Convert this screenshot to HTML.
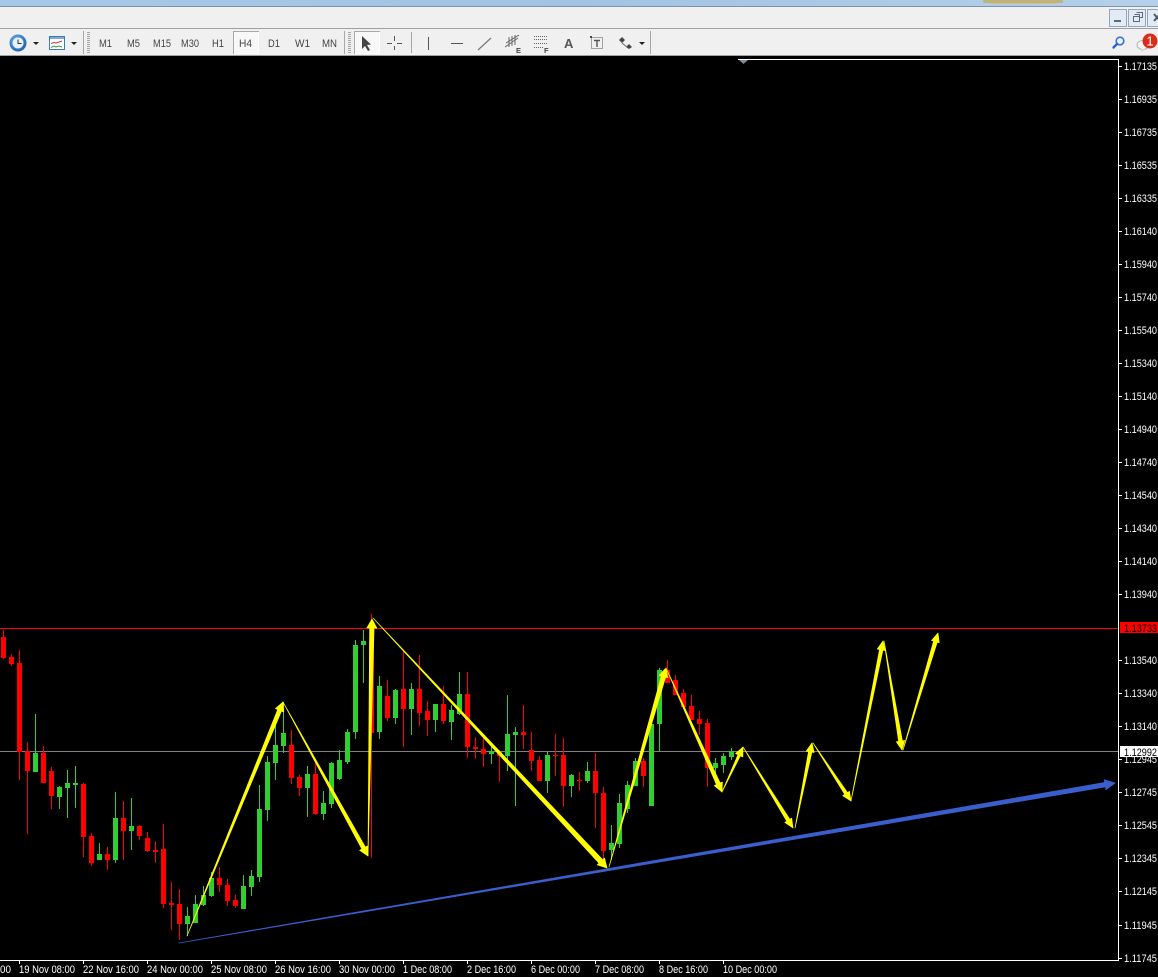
<!DOCTYPE html>
<html lang="en"><head><meta charset="utf-8"><title>Chart</title>
<style>
html,body{margin:0;padding:0;background:#000;width:1158px;height:977px;overflow:hidden}
svg{display:block}
text{font-family:"Liberation Sans",sans-serif}
.p{fill:#fff;font-size:11px}
.t{fill:#fff;font-size:11px}
.m{fill:#444;font-size:11px}
</style></head><body>
<svg width="1158" height="977" viewBox="0 0 1158 977" xmlns="http://www.w3.org/2000/svg">
<defs>
<linearGradient id="tb" x1="0" x2="1" y1="0" y2="0"><stop offset="0" stop-color="#a6c8e8"/><stop offset=".5" stop-color="#a4c3e2"/><stop offset="1" stop-color="#b4d0ea"/></linearGradient>
<radialGradient id="clk" cx=".4" cy=".35" r=".8"><stop offset="0" stop-color="#6fb4f0"/><stop offset="1" stop-color="#0f4f9e"/></radialGradient>
</defs>
<rect width="1158" height="977" fill="#000"/>
<!-- window chrome -->
<rect width="1158" height="6" fill="url(#tb)"/>
<rect x="983" y="0" width="80" height="3" rx="1.5" fill="#bfb27a"/>
<rect x="990" y="3" width="66" height="1" fill="#c8c09a"/>
<rect y="6" width="1158" height="1" fill="#7f92a6"/>
<rect y="7" width="1158" height="21" fill="#f0f0f0"/>
<rect y="28" width="1158" height="1" fill="#a0a0a0"/>
<rect y="29" width="1158" height="26" fill="#f0f0f0"/>
<rect y="55" width="1158" height="1" fill="#a0a0a0"/>
<!-- window buttons -->
<g fill="#e2ebf3" stroke="#92a8bc">
<rect x="1109.5" y="9.5" width="17" height="17"/>
<rect x="1128.5" y="9.5" width="17" height="17"/>
<rect x="1147.5" y="9.5" width="17" height="17"/>
</g>
<rect x="1114" y="20" width="7" height="2" fill="#5d6b78"/>
<path d="M1134.5 14.5h5v2M1136.5 12.5h6v5h-3M1133.5 16.5h6v5h-6z" fill="none" stroke="#5d6b78"/>
<path d="M1154 14l6 7M1160 14l-6 7" stroke="#4f5c68" stroke-width="2"/>
<!-- toolbar left -->
<circle cx="18" cy="43" r="8.5" fill="url(#clk)"/>
<circle cx="18" cy="43" r="5.5" fill="#e8f0f8"/>
<path d="M18 39.5V43.5H21.5" fill="none" stroke="#333" stroke-width="1"/>
<path d="M33 42h6l-3 3z" fill="#222"/>
<rect x="49.5" y="36.5" width="15" height="13" fill="#fdfdfd" stroke="#3c7ab5"/>
<rect x="50" y="37" width="14" height="2" fill="#7fa9cf"/>
<path d="M51 43.5l3-1 2 .5 3-1 3-1" fill="none" stroke="#d23a2a"/>
<path d="M51 47.5l3-1.5 2 1 3-1 3 1" fill="none" stroke="#3aa548"/>
<path d="M71 42h6l-3 3z" fill="#222"/>
<rect x="83" y="31" width="1" height="23" fill="#a8a8a8"/>
<path d="M88.5 32V53" stroke="#a6a6a6" stroke-width="3" stroke-dasharray="1 1"/>
<!-- period buttons -->
<rect x="233.5" y="31.5" width="25" height="22" fill="#f8f8f8" stroke="#a9a9a9"/>
<path d="M234 53.5H258.5V32" fill="none" stroke="#fff"/>
<text class="m" x="99" y="47" textLength="13" lengthAdjust="spacingAndGlyphs">M1</text>
<text class="m" x="127" y="47" textLength="13" lengthAdjust="spacingAndGlyphs">M5</text>
<text class="m" x="153" y="47" textLength="18" lengthAdjust="spacingAndGlyphs">M15</text>
<text class="m" x="181" y="47" textLength="18" lengthAdjust="spacingAndGlyphs">M30</text>
<text class="m" x="212" y="47" textLength="12" lengthAdjust="spacingAndGlyphs">H1</text>
<text class="m" x="239" y="47" textLength="13" lengthAdjust="spacingAndGlyphs">H4</text>
<text class="m" x="268" y="47" textLength="12" lengthAdjust="spacingAndGlyphs">D1</text>
<text class="m" x="295" y="47" textLength="15" lengthAdjust="spacingAndGlyphs">W1</text>
<text class="m" x="322" y="47" textLength="15" lengthAdjust="spacingAndGlyphs">MN</text>
<rect x="344" y="31" width="1" height="23" fill="#a8a8a8"/>
<path d="M349.5 32V53" stroke="#a6a6a6" stroke-width="3" stroke-dasharray="1 1"/>
<!-- drawing tools -->
<rect x="354.5" y="31.5" width="25" height="22" fill="#f8f8f8" stroke="#a9a9a9"/>
<path d="M355 53.5H379.5V32" fill="none" stroke="#fff"/>
<path d="M362 36L371 44.5L367 45L370 50L368 51L365 46L362 49Z" fill="#444"/>
<path d="M394.5 36V41M394.5 46V50M387 43.5H392M397 43.5H402" stroke="#555" fill="none"/>
<rect x="411" y="32" width="1" height="21" fill="#a8a8a8"/>
<path d="M428.5 37V50" stroke="#555"/>
<path d="M451 43.5H463" stroke="#555"/>
<path d="M478 50L491 38" stroke="#777" stroke-width="1.2"/>
<path d="M505 47L518 38M506 43L519 35M509 37V47M512 36V46M515 35V45" stroke="#666" fill="none"/>
<text x="516" y="53" font-size="7.5" font-weight="bold" fill="#444">E</text>
<path d="M534 36.5H547M534 39.5H547M534 43.5H547M534 47.5H544" stroke="#666" stroke-dasharray="1 1"/>
<text x="544" y="53" font-size="7.5" font-weight="bold" fill="#444">F</text>
<text x="564" y="48" font-size="13" font-weight="bold" fill="#555">A</text>
<rect x="591.5" y="37.5" width="11" height="11" fill="none" stroke="#555" stroke-dasharray="1 1"/>
<rect x="590" y="36" width="2" height="2" fill="#444"/>
<path d="M594 40.5H600M597 40.5V47" stroke="#555" stroke-width="1.4"/>
<path d="M622 37l3 3-3 3-3-3zM629 44l3 3-3 2-3-2z" fill="#444"/>
<path d="M622 43l5 4" stroke="#666"/>
<path d="M639 42h6l-3 3z" fill="#222"/>
<rect x="650" y="31" width="1" height="23" fill="#a8a8a8"/>
<!-- search + chat -->
<circle cx="1120" cy="41" r="3.8" fill="#eaf2fb" stroke="#3a72cf" stroke-width="1.6"/>
<path d="M1117 44L1113.5 47.5" stroke="#2a62c8" stroke-width="2.4" stroke-linecap="round"/>
<ellipse cx="1143" cy="45" rx="6" ry="4.5" fill="#f6f6f6" stroke="#b4b4b4"/>
<path d="M1141 49l1 3 3-3z" fill="#d8d8d8"/>
<circle cx="1150" cy="41" r="7.5" fill="#d92c1a"/>
<text x="1150" y="45.5" font-size="13" text-anchor="middle" fill="#fff">1</text>
<!-- chart frame -->
<rect x="738" y="59" width="381" height="1" fill="#fff"/>
<path d="M739 60h9l-4.5 4z" fill="#7f8d99"/>
<rect x="1118" y="59" width="1" height="902" fill="#fff"/>
<rect x="0" y="960" width="1119" height="1" fill="#fff"/>
<!-- horizontal lines -->
<rect x="0" y="628" width="1118" height="1" fill="#ff0000"/>
<rect x="0" y="751" width="1118" height="1" fill="#808080"/>
<!-- candles -->
<g shape-rendering="crispEdges" fill="none">
<path stroke="#ff0000" stroke-width="1" d="M3.5 630V659M11.5 654V666M19.5 650V780M27.5 742V834M43.5 746V783M51.5 767V809M83.5 783V857M91.5 833V866M107.5 847V870M123.5 801V860M139.5 825V840M147.5 832V852M155.5 841V863M163.5 824V908M171.5 882V930M179.5 889V940M219.5 867V892M227.5 879V906M235.5 895V908M291.5 730V784M299.5 775V796M315.5 763V815M371.5 614V858M387.5 680V721M403.5 650V747M419.5 655V726M427.5 701V736M443.5 686V724M467.5 672V758M475.5 737V759M483.5 737V767M499.5 750V782M523.5 705V749M531.5 732V771M539.5 756V781M555.5 734V776M563.5 738V807M579.5 772V791M595.5 753V828M603.5 787V860M643.5 758V787M667.5 660V683M675.5 675V695M683.5 689V707M691.5 695V720M699.5 711V735M707.5 719V787"/>
<path stroke="#ff0000" stroke-width="5" d="M3.5 637V658M11.5 657V664M19.5 663V752M27.5 751V771M43.5 753V783M51.5 771V796M83.5 784V837M91.5 836V863M107.5 854V860M123.5 818V831M139.5 826V836M147.5 838V851M155.5 850V852M163.5 849V904M171.5 903V905M179.5 904V924M219.5 878V885M227.5 885V901M235.5 900V906M291.5 745V778M299.5 777V788M315.5 774V814M371.5 641V733M387.5 696V718M403.5 689V709M419.5 689V713M427.5 711V720M443.5 704V721M467.5 694V747M475.5 747V749M483.5 749V754M499.5 752V756M523.5 732V735M531.5 750V761M539.5 760V781M555.5 755V756M563.5 755V786M579.5 780V781M595.5 771V793M603.5 793V851M643.5 761V776M667.5 670V683M675.5 680V695M683.5 693V707M691.5 706V720M699.5 719V724M707.5 723V768"/>
<path stroke="#32cd32" stroke-width="1" d="M35.5 714V772M59.5 786V809M67.5 770V818M75.5 766V808M99.5 843V860M115.5 792V863M131.5 798V850M187.5 907V936M195.5 895V923M203.5 886V906M211.5 872V897M243.5 875V909M251.5 870V896M259.5 785V882M267.5 756V821M275.5 720V780M283.5 702V753M307.5 766V817M323.5 791V820M331.5 762V808M339.5 750V780M347.5 729V764M355.5 640V739M363.5 630V683M379.5 676V739M395.5 689V724M411.5 683V735M435.5 704V732M451.5 705V740M459.5 672V715M491.5 747V764M507.5 695V771M515.5 727V806M547.5 752V793M571.5 774V797M587.5 762V783M611.5 825V860M619.5 794V848M627.5 781V813M635.5 758V786M651.5 724V806M659.5 668V751M715.5 758V783M723.5 753V773M731.5 748V760"/>
<path stroke="#32cd32" stroke-width="5" d="M35.5 753V772M59.5 787V797M67.5 783V788M75.5 783V785M99.5 854V860M115.5 818V860M131.5 826V831M187.5 916V924M195.5 904V923M203.5 895V905M211.5 878V896M243.5 886V909M251.5 876V887M259.5 809V877M267.5 762V810M275.5 745V763M283.5 733V746M307.5 774V788M323.5 803V814M331.5 763V804M339.5 760V779M347.5 732V762M355.5 645V732M363.5 641V645M379.5 686V732M395.5 690V718M411.5 689V709M435.5 704V720M451.5 710V722M459.5 694V714M491.5 751V754M507.5 734V756M515.5 732V735M547.5 755V781M571.5 775V786M587.5 771V781M611.5 843V850M619.5 803V844M627.5 785V809M635.5 761V786M651.5 724V806M659.5 670V724M715.5 763V768M723.5 756V765M731.5 751V757"/>
</g>
<!-- blue trend arrow -->
<polygon fill="#3a5fcd" stroke="#3a5fcd" stroke-width="0.8" stroke-linejoin="round" points="179,943 1105.47,786.87 1105.94,789.63 1115,783 1104.26,779.77 1104.73,782.53"/>
<!-- yellow arrows -->
<g fill="#ffff00" stroke="#ffff00" stroke-width="0.7" stroke-linejoin="round">
<polygon points="187,936 281.45,711.06 283.76,712.01 283,702 275.44,708.59 277.75,709.54"/>
<polygon points="283,702 361.9,849.09 359.71,850.29 368,856 367.59,845.95 365.4,847.15"/>
<polygon points="368,856 374.05,628 376.85,628.1 372,619 366.85,627.9 369.65,628"/>
<polygon points="373,618 599.02,863.14 597.2,864.85 607,868 604.5,858.01 602.68,859.72"/>
<polygon points="609,867 665.61,677.2 667.82,677.84 666,668 659.18,675.36 661.39,676"/>
<polygon points="666,668 716.48,784.62 714.2,785.65 722,792 722.4,781.95 720.12,782.98"/>
<polygon points="722,792 740.38,755.75 742.82,756.89 743,747 735.58,753.51 738.02,754.65"/>
<polygon points="743,747 786.77,821.25 784.9,822.4 793,828 791.7,818.2 789.83,819.35"/>
<polygon points="795,828 811.87,752.13 814.12,752.58 812,743 806.28,751.02 808.53,751.47"/>
<polygon points="813,743 844.76,794.38 842.75,795.69 851,801 849.45,791.31 847.44,792.62"/>
<polygon points="851,801 882.87,650.13 885.12,650.58 883,641 877.28,649.02 879.53,649.47"/>
<polygon points="884,641 898.63,741.41 896.36,741.78 902,750 904.64,740.42 902.37,740.79"/>
<polygon points="903,750 937.22,642.15 939.23,642.75 938,633 931.57,640.45 933.58,641.05"/>
</g>
<!-- price axis ticks -->
<path stroke="#fff" d="M1119 66.5h3M1119 99.5h3M1119 132.5h3M1119 165.5h3M1119 198.5h3M1119 231.5h3M1119 264.5h3M1119 297.5h3M1119 330.5h3M1119 363.5h3M1119 396.5h3M1119 429.5h3M1119 462.5h3M1119 495.5h3M1119 528.5h3M1119 561.5h3M1119 594.5h3M1119 660.5h3M1119 693.5h3M1119 726.5h3M1119 759.5h3M1119 792.5h3M1119 825.5h3M1119 858.5h3M1119 891.5h3M1119 925.5h3M1119 958.5h3"/>
<g class="p">
<text class="p" x="1124" y="70" textLength="33" lengthAdjust="spacingAndGlyphs">1.17135</text>
<text class="p" x="1124" y="103" textLength="33" lengthAdjust="spacingAndGlyphs">1.16935</text>
<text class="p" x="1124" y="136" textLength="33" lengthAdjust="spacingAndGlyphs">1.16735</text>
<text class="p" x="1124" y="169" textLength="33" lengthAdjust="spacingAndGlyphs">1.16535</text>
<text class="p" x="1124" y="202" textLength="33" lengthAdjust="spacingAndGlyphs">1.16335</text>
<text class="p" x="1124" y="235" textLength="33" lengthAdjust="spacingAndGlyphs">1.16140</text>
<text class="p" x="1124" y="268" textLength="33" lengthAdjust="spacingAndGlyphs">1.15940</text>
<text class="p" x="1124" y="301" textLength="33" lengthAdjust="spacingAndGlyphs">1.15740</text>
<text class="p" x="1124" y="334" textLength="33" lengthAdjust="spacingAndGlyphs">1.15540</text>
<text class="p" x="1124" y="367" textLength="33" lengthAdjust="spacingAndGlyphs">1.15340</text>
<text class="p" x="1124" y="400" textLength="33" lengthAdjust="spacingAndGlyphs">1.15140</text>
<text class="p" x="1124" y="433" textLength="33" lengthAdjust="spacingAndGlyphs">1.14940</text>
<text class="p" x="1124" y="466" textLength="33" lengthAdjust="spacingAndGlyphs">1.14740</text>
<text class="p" x="1124" y="499" textLength="33" lengthAdjust="spacingAndGlyphs">1.14540</text>
<text class="p" x="1124" y="532" textLength="33" lengthAdjust="spacingAndGlyphs">1.14340</text>
<text class="p" x="1124" y="565" textLength="33" lengthAdjust="spacingAndGlyphs">1.14140</text>
<text class="p" x="1124" y="598" textLength="33" lengthAdjust="spacingAndGlyphs">1.13940</text>
<text class="p" x="1124" y="664" textLength="33" lengthAdjust="spacingAndGlyphs">1.13540</text>
<text class="p" x="1124" y="697" textLength="33" lengthAdjust="spacingAndGlyphs">1.13340</text>
<text class="p" x="1124" y="730" textLength="33" lengthAdjust="spacingAndGlyphs">1.13140</text>
<text class="p" x="1124" y="763" textLength="33" lengthAdjust="spacingAndGlyphs">1.12945</text>
<text class="p" x="1124" y="796" textLength="33" lengthAdjust="spacingAndGlyphs">1.12745</text>
<text class="p" x="1124" y="829" textLength="33" lengthAdjust="spacingAndGlyphs">1.12545</text>
<text class="p" x="1124" y="862" textLength="33" lengthAdjust="spacingAndGlyphs">1.12345</text>
<text class="p" x="1124" y="895" textLength="33" lengthAdjust="spacingAndGlyphs">1.12145</text>
<text class="p" x="1124" y="929" textLength="33" lengthAdjust="spacingAndGlyphs">1.11945</text>
<text class="p" x="1124" y="962" textLength="33" lengthAdjust="spacingAndGlyphs">1.11745</text>
</g>
<!-- price tags -->
<rect x="1120" y="622" width="38" height="11" fill="#ff0000"/>
<text x="1124" y="632" font-size="11" fill="#000" textLength="33" lengthAdjust="spacingAndGlyphs">1.13733</text>
<rect x="1120" y="746" width="38" height="11" fill="#fff"/>
<text x="1124" y="756" font-size="11" fill="#000" textLength="33" lengthAdjust="spacingAndGlyphs">1.12992</text>
<!-- time axis ticks -->
<path stroke="#fff" d="M19.5 961v3M83.5 961v3M147.5 961v3M211.5 961v3M275.5 961v3M339.5 961v3M403.5 961v3M467.5 961v3M531.5 961v3M595.5 961v3M659.5 961v3M723.5 961v3"/>
<text class="t" x="0" y="973" textLength="11" lengthAdjust="spacingAndGlyphs">00</text>
<text class="t" x="19" y="973" textLength="56" lengthAdjust="spacingAndGlyphs">19 Nov 08:00</text>
<text class="t" x="83" y="973" textLength="56" lengthAdjust="spacingAndGlyphs">22 Nov 16:00</text>
<text class="t" x="147" y="973" textLength="56" lengthAdjust="spacingAndGlyphs">24 Nov 00:00</text>
<text class="t" x="211" y="973" textLength="56" lengthAdjust="spacingAndGlyphs">25 Nov 08:00</text>
<text class="t" x="275" y="973" textLength="56" lengthAdjust="spacingAndGlyphs">26 Nov 16:00</text>
<text class="t" x="339" y="973" textLength="56" lengthAdjust="spacingAndGlyphs">30 Nov 00:00</text>
<text class="t" x="403" y="973" textLength="49" lengthAdjust="spacingAndGlyphs">1 Dec 08:00</text>
<text class="t" x="467" y="973" textLength="49" lengthAdjust="spacingAndGlyphs">2 Dec 16:00</text>
<text class="t" x="531" y="973" textLength="49" lengthAdjust="spacingAndGlyphs">6 Dec 00:00</text>
<text class="t" x="595" y="973" textLength="49" lengthAdjust="spacingAndGlyphs">7 Dec 08:00</text>
<text class="t" x="659" y="973" textLength="49" lengthAdjust="spacingAndGlyphs">8 Dec 16:00</text>
<text class="t" x="723" y="973" textLength="54" lengthAdjust="spacingAndGlyphs">10 Dec 00:00</text>
</svg>
</body></html>
